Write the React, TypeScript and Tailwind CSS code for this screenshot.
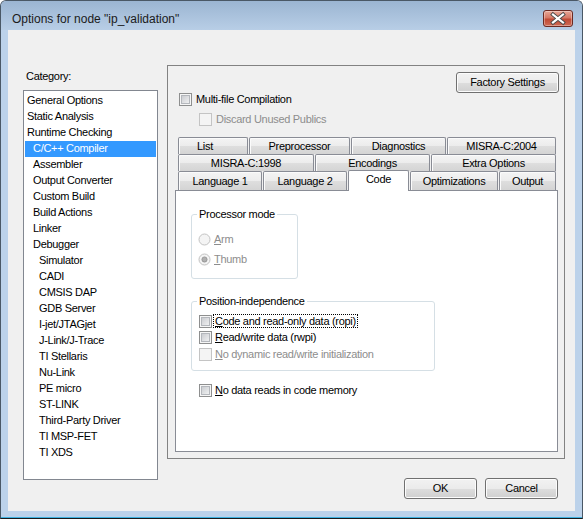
import React from 'react';

type Category = [string, number];

const categories: Category[] = [
  ['General Options', 0],
  ['Static Analysis', 0],
  ['Runtime Checking', 0],
  ['C/C++ Compiler', 1],
  ['Assembler', 1],
  ['Output Converter', 1],
  ['Custom Build', 1],
  ['Build Actions', 1],
  ['Linker', 1],
  ['Debugger', 1],
  ['Simulator', 2],
  ['CADI', 2],
  ['CMSIS DAP', 2],
  ['GDB Server', 2],
  ['I-jet/JTAGjet', 2],
  ['J-Link/J-Trace', 2],
  ['TI Stellaris', 2],
  ['Nu-Link', 2],
  ['PE micro', 2],
  ['ST-LINK', 2],
  ['Third-Party Driver', 2],
  ['TI MSP-FET', 2],
  ['TI XDS', 2],
];

const indents = ['pl-[2px]', 'pl-[8px]', 'pl-[14px]'];

// class strings kept whole so tailwind picks them up
const tabRows = [
  [
    { label: 'List', cls: 'w-[70px] pr-[16px]' },
    { label: 'Preprocessor', cls: 'w-[101px]' },
    { label: 'Diagnostics', cls: 'w-[95px]' },
    { label: 'MISRA-C:2004', cls: 'w-[109px]' },
  ],
  [
    { label: 'MISRA-C:1998', cls: 'w-[136px]' },
    { label: 'Encodings', cls: 'w-[115px]' },
    { label: 'Extra Options', cls: 'w-[125px]' },
  ],
];

const lastRow = [
  { label: 'Language 1', cls: 'w-[84px]' },
  { label: 'Language 2', cls: 'w-[84px]' },
  { label: 'Code', cls: 'w-[61px]', active: true },
  { label: 'Optimizations', cls: 'w-[88px]' },
  { label: 'Output', cls: 'w-[57px]' },
];

const tabBase =
  'flex h-full items-center justify-center rounded-t-[2px] border border-b-0 border-[#898c95] bg-[linear-gradient(#f4f4f4,#ececec_50%,#dedede_52%,#d4d4d4)] shadow-[inset_1px_1px_0_#fbfbfb] leading-[15px]';

function Checkbox({ disabled }: { disabled?: boolean }) {
  if (disabled) {
    return <span className="block h-[13px] w-[13px] shrink-0 border border-[#c4c4c4] bg-[#f4f4f4]" />;
  }
  return (
    <span className="flex h-[13px] w-[13px] shrink-0 items-center justify-center border border-[#8e8f8f] bg-[#f6f6f6]">
      <span className="block h-[9px] w-[9px] border border-[#b4b7bc] bg-[linear-gradient(135deg,#cbcdd1,#eff0f1)]" />
    </span>
  );
}

function Radio({ checked }: { checked?: boolean }) {
  return (
    <svg width="13" height="13" viewBox="0 0 13 13" className="shrink-0">
      <circle cx="6.5" cy="6.5" r="5.5" fill="#f4f4f4" stroke="#c2c2c2" />
      {checked && <circle cx="6.5" cy="6.5" r="2.6" fill="#b0b0b0" stroke="#8e8e8e" strokeWidth="0.8" />}
    </svg>
  );
}

function Button({ className, children }: { className: string; children: React.ReactNode }) {
  return (
    <button
      type="button"
      className={`${className} flex h-[21px] items-center justify-center rounded-[3px] border border-[#707070] bg-[linear-gradient(#f2f2f2,#ebebeb_50%,#dddddd_51%,#cfcfcf)] shadow-[inset_0_0_0_1px_#fcfcfc] leading-[15px]`}
    >
      {children}
    </button>
  );
}

export default function App() {
  return (
    <div className="h-[519px] w-[583px] bg-white font-['Liberation_Sans',Arial,sans-serif] text-[11px] tracking-[-0.3px] text-black">
      <div className="flex h-full flex-col overflow-hidden rounded-t-[6px] border border-[#4a5866] border-b-[#1a1a1a] bg-[#bcd2ea]">
        {/* title bar */}
        <div className="flex h-[29px] shrink-0 items-start bg-[linear-gradient(#9bb5d2,#b8cee6)]">
          <div className="pl-[11px] pt-[11px] text-[12px] leading-[15px] tracking-normal text-[#1b1b1b]">
            Options for node &quot;ip_validation&quot;
          </div>
          <div className="ml-auto mr-[9px] mt-[9px] h-[17px] w-[30px] overflow-hidden rounded-[3px] border border-[#6b2a22] bg-[linear-gradient(#e8a797,#d57865_45%,#c04a35_55%,#cf6b55)] shadow-[inset_0_0_0_1px_rgba(255,255,255,0.35)]">
            <svg width="28" height="15" viewBox="0 0 28 15">
              <path d="M9 3.5 L19 11.5 M19 3.5 L9 11.5" stroke="#4a4a4a" strokeWidth="4" strokeLinecap="square" />
              <path d="M9 3.5 L19 11.5 M19 3.5 L9 11.5" stroke="#ffffff" strokeWidth="2.2" strokeLinecap="square" />
            </svg>
          </div>
        </div>

        {/* client area */}
        <div className="mx-[7px] flex h-[481px] shrink-0 bg-[#f0f0f0]">
          <div className="ml-[15px] w-[135px] shrink-0">
            <div className="mt-[38px] h-[16px] pl-[3px] leading-[16px]">Category:</div>
            <div className="mt-[6px] h-[390px] border border-[#828790] bg-white pt-[2px]">
              {categories.map(([label, level]) => {
                const selected = label === 'C/C++ Compiler';
                return (
                  <div
                    key={label}
                    className={`mx-px h-[16px] leading-[15px] ${indents[level]} ${selected ? 'bg-[#3399ff] text-white' : ''}`}
                  >
                    {label}
                  </div>
                );
              })}
            </div>
          </div>

          <div className="ml-[9px] mt-[35px] w-[398px] shrink-0">
            <div className="h-[394px] border border-[#828282]">
              <div className="flex">
                <div className="pl-[11px] pt-[25px]">
                  <div className="flex h-[16px] items-center gap-[4px]">
                    <Checkbox />
                    <span>Multi-file Compilation</span>
                  </div>
                  <div className="mt-[4px] flex h-[16px] items-center gap-[4px] pl-[20px] text-[#8d8d8d]">
                    <Checkbox disabled />
                    <span>Discard Unused Publics</span>
                  </div>
                </div>
                <div className="ml-auto pr-[5px] pt-[6px]">
                  <Button className="w-[103px]">Factory Settings</Button>
                </div>
              </div>

              {/* tab control */}
              <div className="ml-[7px] mt-[10px] w-[383px]">
                {tabRows.map((row, i) => (
                  <div key={i} className="flex h-[17px] gap-px pl-[3px]">
                    {row.map((t) => (
                      <div key={t.label} className={`${t.cls} ${tabBase}`}>
                        {t.label}
                      </div>
                    ))}
                  </div>
                ))}
                <div className="flex h-[19px] items-end gap-px pl-[3px]">
                  {lastRow.map((t) =>
                    t.active ? (
                      <div
                        key={t.label}
                        className={`${t.cls} relative z-10 -mb-px flex h-[21px] items-start justify-center rounded-t-[2px] border border-b-0 border-[#898c95] bg-white pt-[2px] leading-[13px]`}
                      >
                        {t.label}
                      </div>
                    ) : (
                      <div key={t.label} className={`${t.cls} h-[18px] ${tabBase}`}>
                        {t.label}
                      </div>
                    ),
                  )}
                </div>

                <div className="h-[262px] border border-[#898c95] bg-white">
                  <fieldset className="ml-[15px] mt-[17px] w-[107px] rounded-[3px] border border-[#d5dfe5] pb-[11px] pt-[10px]">
                    <legend className="ml-[5px] px-[2px] leading-[13px]">Processor mode</legend>
                    <div className="flex h-[16px] items-center gap-[3px] pl-[6px] text-[#8d8d8d]">
                      <Radio />
                      <span>
                        <span className="underline">A</span>rm
                      </span>
                    </div>
                    <div className="mt-[4px] flex h-[16px] items-center gap-[3px] pl-[6px] text-[#8d8d8d]">
                      <Radio checked />
                      <span>
                        <span className="underline">T</span>humb
                      </span>
                    </div>
                  </fieldset>

                  <fieldset className="ml-[15px] mt-[16px] w-[244px] rounded-[3px] border border-[#d5dfe5] pb-[8px] pt-[5px]">
                    <legend className="ml-[5px] px-[2px] leading-[13px]">Position-independence</legend>
                    <div className="flex h-[16px] items-center gap-[2px] pl-[7px]">
                      <Checkbox />
                      <span className="inline-block px-px leading-[12px] outline outline-dotted outline-black">
                        <span className="underline">C</span>ode and read-only data (ropi)
                      </span>
                    </div>
                    <div className="flex h-[16px] items-center gap-[3px] pl-[7px]">
                      <Checkbox />
                      <span>
                        <span className="underline">R</span>ead/write data (rwpi)
                      </span>
                    </div>
                    <div className="mt-px flex h-[16px] items-center gap-[3px] pl-[7px] text-[#8d8d8d]">
                      <Checkbox disabled />
                      <span>
                        <span className="underline">N</span>o dynamic read/write initialization
                      </span>
                    </div>
                  </fieldset>

                  <div className="ml-[23px] mt-[11px] flex h-[16px] items-center gap-[3px]">
                    <Checkbox />
                    <span>
                      <span className="underline">N</span>o data reads in code memory
                    </span>
                  </div>
                </div>
              </div>
            </div>

            <div className="mt-[19px] flex justify-end gap-[8px] pr-[7px]">
              <Button className="w-[73px]">OK</Button>
              <Button className="w-[73px]">Cancel</Button>
            </div>
          </div>
        </div>

        <div className="h-[6px] shrink-0" />
        <div className="h-px shrink-0 bg-[#3fb2e0]" />
      </div>
    </div>
  );
}
